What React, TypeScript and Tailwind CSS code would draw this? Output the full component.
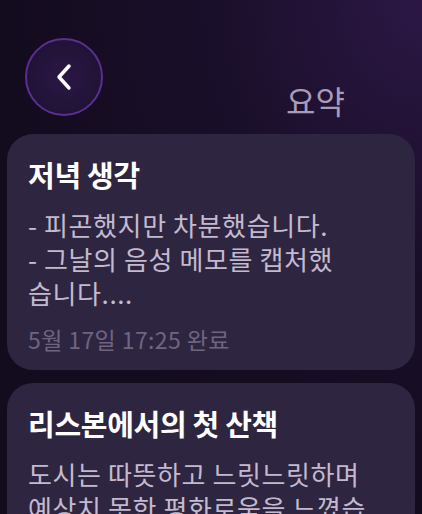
import React from 'react';

type Note = {
  title: string;
  body: string[];
  meta?: string;
};

const notes: Note[] = [
  {
    title: '저녁 생각',
    body: ['- 피곤했지만 차분했습니다.', '- 그날의 음성 메모를 캡처했', '습니다....'],
    meta: '5월 17일 17:25 완료',
  },
  {
    title: '리스본에서의 첫 산책',
    body: ['도시는 따뜻하고 느릿느릿하며', '예상치 못한 평화로움을 느꼈습', '니다.'],
  },
];

function NoteCard({ note }: { note: Note }) {
  return (
    <div className="rounded-[26px] bg-[#2e2640] px-[21px] pt-[20px] pb-[14px]">
      <h2 className="text-[29px] font-bold leading-[40px] text-white tracking-[-0.3px]">{note.title}</h2>
      <div className="mt-[14px] text-[26px] leading-[34px] text-[#c4bacf] tracking-[0.6px] whitespace-nowrap">
        {note.body.map((line, i) => (
          <p key={i}>{line}</p>
        ))}
      </div>
      {note.meta && (
        <p className="mt-[12px] text-[23px] leading-[34px] text-[#6e6580] tracking-[0.4px]">{note.meta}</p>
      )}
    </div>
  );
}

export default function App() {
  return (
    <div
      className="h-[514px] w-[422px] overflow-hidden bg-[radial-gradient(ellipse_at_top_right,#2c1745_0%,#1a0f2a_35%,#130b1e_70%)]"
      style={{ fontFamily: '"Noto Sans CJK KR", "Noto Sans", sans-serif' }}
    >
      {/* 헤더 */}
      <div className="flex items-end pl-[25px] pt-[38px]">
        <button className="flex h-[78px] w-[78px] items-center justify-center rounded-full border-2 border-[#5a2f92] bg-[radial-gradient(circle_at_center,#2a1745_0%,#1d1130_100%)]">
          <svg width="20" height="30" viewBox="0 0 20 30" fill="none">
            <path d="M15 4L5 15l10 11" stroke="white" strokeWidth="3.5" strokeLinecap="round" strokeLinejoin="round" />
          </svg>
        </button>
        <span className="ml-[183px] mb-[-4px] text-[32px] leading-[40px] text-[#a99cb8]">요약</span>
      </div>

      {/* 노트 목록 */}
      <div className="mt-[18px] flex flex-col gap-[13px] px-[7px]">
        {notes.map((n, i) => (
          <NoteCard key={i} note={n} />
        ))}
      </div>
    </div>
  );
}
